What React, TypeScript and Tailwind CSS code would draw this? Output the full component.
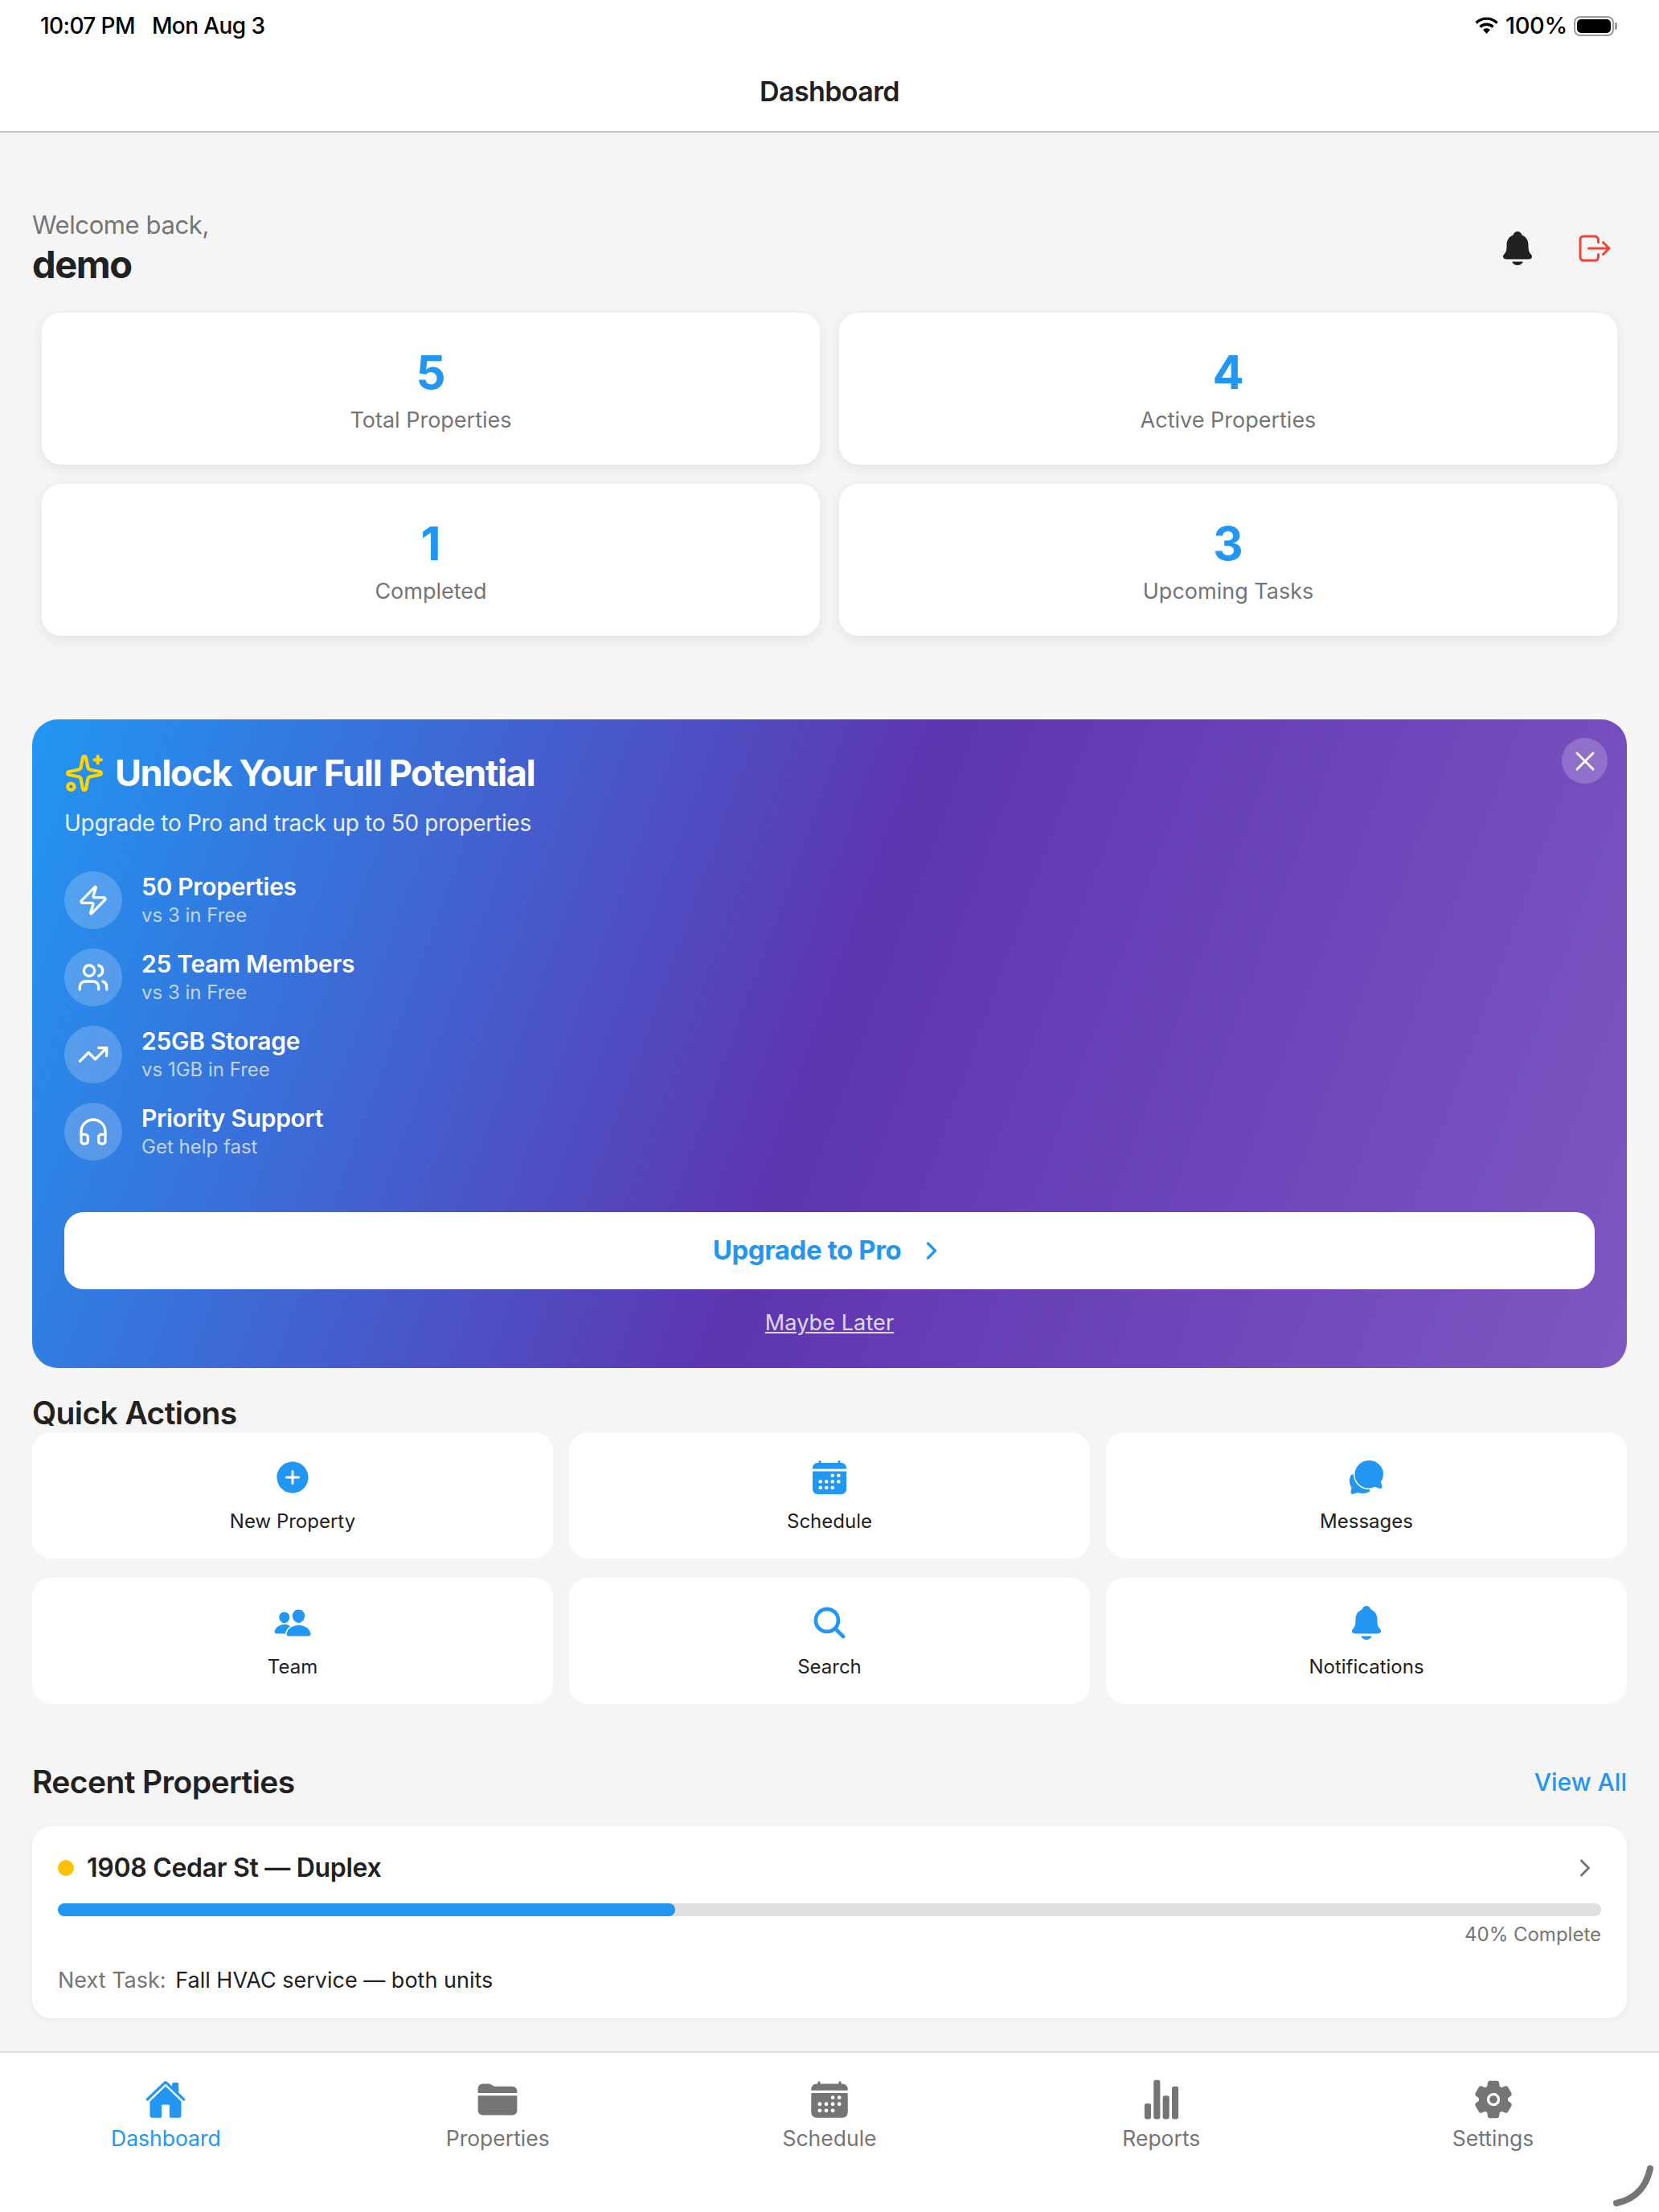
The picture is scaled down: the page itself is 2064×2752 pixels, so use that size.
import React from 'react';
import { Sparkles, X, Zap, Users, TrendingUp, Headphones, ChevronRight } from 'lucide-react';
import {
  IoNotifications,
  IoLogOutOutline,
  IoAddCircle,
  IoCalendar,
  IoChatbubbles,
  IoPeople,
  IoSearch,
  IoHome,
  IoFolder,
  IoStatsChart,
  IoSettings,
} from 'react-icons/io5';

const STATS = [
  { value: '5', label: 'Total Properties' },
  { value: '4', label: 'Active Properties' },
  { value: '1', label: 'Completed' },
  { value: '3', label: 'Upcoming Tasks' },
];

const FEATURES = [
  { icon: Zap, title: '50 Properties', sub: 'vs 3 in Free' },
  { icon: Users, title: '25 Team Members', sub: 'vs 3 in Free' },
  { icon: TrendingUp, title: '25GB Storage', sub: 'vs 1GB in Free' },
  { icon: Headphones, title: 'Priority Support', sub: 'Get help fast' },
];

const ACTIONS = [
  { icon: IoAddCircle, label: 'New Property' },
  { icon: IoCalendar, label: 'Schedule' },
  { icon: IoChatbubbles, label: 'Messages' },
  { icon: IoPeople, label: 'Team' },
  { icon: IoSearch, label: 'Search' },
  { icon: IoNotifications, label: 'Notifications' },
];

const TABS = [
  { icon: IoHome, label: 'Dashboard', active: true },
  { icon: IoFolder, label: 'Properties', active: false },
  { icon: IoCalendar, label: 'Schedule', active: false },
  { icon: IoStatsChart, label: 'Reports', active: false },
  { icon: IoSettings, label: 'Settings', active: false },
];

const StatusBar: React.FC = () => (
  <div className="flex h-[64px] items-center justify-between pl-[50px] pr-[52px] font-medium text-black">
    <div className="flex items-center gap-[21px] text-[28px] tracking-[-0.6px]">
      <span>10:07 PM</span>
      <span>Mon Aug 3</span>
    </div>
    <div className="flex items-center text-[29px]">
      <svg width="31" height="22" viewBox="0 0 31 22" fill="none" className="mr-[8px]">
        <path d="M15.5 21 L11 16 A6.5 6.5 0 0 1 20 16 Z" fill="#000" />
        <path d="M7.5 12.5 A11.5 11.5 0 0 1 23.5 12.5" stroke="#000" strokeWidth="3.4" />
        <path d="M2.5 7.5 A18.5 18.5 0 0 1 28.5 7.5" stroke="#000" strokeWidth="3.4" />
      </svg>
      <span className="tracking-[-0.3px]">100%</span>
      <div className="ml-[8px] flex h-[25px] w-[50px] items-center rounded-[8px] border-2 border-[#9a9a9a] p-[2px]">
        <div className="h-full w-full rounded-[5px] bg-black" />
      </div>
      <div className="ml-[1px] h-[9px] w-[3px] rounded-r-[2px] bg-[#9a9a9a]" />
    </div>
  </div>
);

export default function App() {
  return (
    <div className="relative flex h-[2752px] w-[2064px] flex-col overflow-hidden bg-[#f5f5f5] font-['Inter','Noto_Sans',sans-serif] text-[#212121]">
      {/* Header */}
      <header className="h-[165px] shrink-0 border-b-2 border-[#c4c4c4] bg-white">
        <StatusBar />
        <div className="flex h-[99px] items-center justify-center text-[34px] font-semibold tracking-[-0.6px]">
          Dashboard
        </div>
      </header>

      <main className="flex flex-1 flex-col px-[40px]">
        {/* Greeting */}
        <div className="mt-[93px] flex items-center justify-between">
          <div>
            <div className="text-[31px] leading-[44px] tracking-[-0.4px] text-[#757575]">Welcome back,</div>
            <div className="text-[47px] font-bold leading-[54px] tracking-[-1.4px]">demo</div>
          </div>
          <div className="mr-[16px] mt-[3px] flex items-center gap-[48px]">
            <IoNotifications size={48} color="#212121" />
            <IoLogOutOutline size={48} color="#F44336" />
          </div>
        </div>

        {/* Stats */}
        <div className="mx-[12px] mt-[33px] grid grid-cols-2 gap-x-[24px] gap-y-[24px]">
          {STATS.map((s) => (
            <div
              key={s.label}
              className="flex h-[189px] flex-col items-center rounded-[24px] bg-white pt-[38px] shadow-[0_4px_16px_rgba(0,0,0,0.08)]"
            >
              <div className="text-[58px] font-bold leading-[72px] text-[#2196F3]">{s.value}</div>
              <div className="mt-[4px] text-[27px] leading-[40px] text-[#757575]">{s.label}</div>
            </div>
          ))}
        </div>

        {/* Upgrade banner */}
        <section className="relative mt-[104px] flex h-[807px] flex-col rounded-[32px] bg-[linear-gradient(110deg,#2196F3_0%,#5E35B1_50%,#7E57C2_100%)] px-[40px] pt-[41px] text-white">
          <button className="absolute right-[24px] top-[23px] flex h-[57px] w-[57px] items-center justify-center rounded-full bg-white/20">
            <X size={40} strokeWidth={1.75} />
          </button>
          <div className="flex items-center gap-[13px]">
            <Sparkles size={50} color="#FFD600" strokeWidth={2} />
            <h2 className="text-[45px] font-bold leading-[52px] tracking-[-1.4px]">Unlock Your Full Potential</h2>
          </div>
          <p className="mt-[16px] text-[28px] leading-[40px] tracking-[-0.3px] text-white/90">
            Upgrade to Pro and track up to 50 properties
          </p>
          <div className="mt-[40px] flex flex-col gap-[24px]">
            {FEATURES.map((f) => (
              <div key={f.title} className="flex items-center gap-[24px]">
                <div className="flex h-[72px] w-[72px] shrink-0 items-center justify-center rounded-full bg-white/20">
                  <f.icon size={40} strokeWidth={2} />
                </div>
                <div>
                  <div className="text-[30px] font-semibold leading-[38px] tracking-[-0.3px]">{f.title}</div>
                  <div className="text-[24px] leading-[34px] text-white/70">{f.sub}</div>
                </div>
              </div>
            ))}
          </div>
          <button className="mt-[64px] flex h-[96px] shrink-0 items-center justify-center gap-[20px] rounded-[24px] bg-white text-[33px] font-bold tracking-[-0.4px] text-[#2196F3]">
            Upgrade to Pro
            <ChevronRight size={36} strokeWidth={2.25} />
          </button>
          <div className="mt-[24px] text-center text-[27px] leading-[36px] tracking-[0.1px] text-white/80 underline">
            Maybe Later
          </div>
        </section>

        {/* Quick actions */}
        <h3 className="mt-[32px] text-[39px] font-semibold leading-[48px] tracking-[-0.6px]">Quick Actions</h3>
        <div className="grid grid-cols-3 gap-x-[20px] gap-y-[24px]">
          {ACTIONS.map((a) => (
            <div key={a.label} className="flex h-[157px] flex-col items-center rounded-[24px] bg-white pt-[32px]">
              <a.icon size={48} color="#2196F3" />
              <div className="mt-[15px] text-[24px] leading-[32px]">{a.label}</div>
            </div>
          ))}
        </div>

        {/* Recent properties */}
        <div className="mt-[72px] flex items-center justify-between">
          <h3 className="text-[39px] font-semibold leading-[50px] tracking-[-0.6px]">Recent Properties</h3>
          <span className="text-[30px] font-medium text-[#2196F3]">View All</span>
        </div>
        <div className="mt-[30px] h-[239px] rounded-[24px] bg-white px-[32px] pt-[32px] shadow-[0_2px_8px_rgba(0,0,0,0.05)]">
          <div className="flex items-center justify-between">
            <div className="flex items-center gap-[16px]">
              <div className="h-[20px] w-[20px] rounded-full bg-[#FFC107]" />
              <div className="text-[32px] font-semibold leading-[40px] tracking-[-0.3px]">1908 Cedar St — Duplex</div>
            </div>
            <ChevronRight size={36} color="#757575" strokeWidth={2} className="mr-[2px]" />
          </div>
          <div className="mt-[24px] h-[16px] rounded-[8px] bg-[#e0e0e0]">
            <div className="h-full rounded-[8px] bg-[#2196F3]" style={{ width: '40%' }} />
          </div>
          <div className="mt-[8px] text-right text-[24px] leading-[30px] text-[#757575]">40% Complete</div>
          <div className="mt-[23px] text-[27px] leading-[38px]">
            <span className="mr-[4px] text-[#757575]">Next Task: </span>Fall HVAC service — both units
          </div>
        </div>
      </main>

      {/* Tab bar */}
      <nav className="grid h-[200px] shrink-0 grid-cols-5 border-t-2 border-[#e0e0e0] bg-white pt-[32px]">
        {TABS.map((t) => (
          <div
            key={t.label}
            className={`flex flex-col items-center ${t.active ? 'text-[#2196F3]' : 'text-[#757575]'}`}
          >
            <t.icon size={52} />
            <span className="mt-[4px] text-[26.5px] leading-[36px]">{t.label}</span>
          </div>
        ))}
      </nav>

      {/* iPad corner indicator */}
      <svg width="60" height="60" viewBox="0 0 60 60" className="absolute bottom-0 right-[6px]">
        <path d="M55 6 C50 30 36 44 13 49" fill="none" stroke="#757575" strokeWidth="8" strokeLinecap="round" />
      </svg>
    </div>
  );
}
